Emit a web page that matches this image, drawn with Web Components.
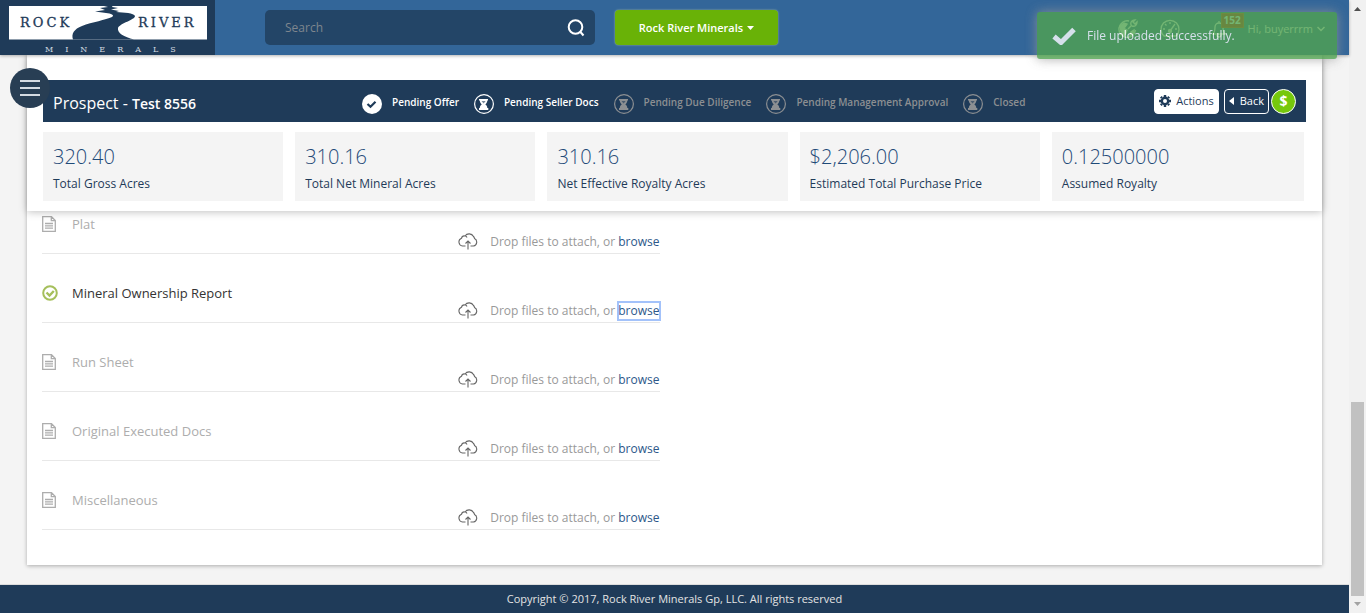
<!DOCTYPE html>
<html lang="en">
<head>
<meta charset="utf-8">
<title>Prospect - Test 8556</title>
<style>
  body { margin: 0; background: #f4f4f4; color: #333; font: 12px/18px "Open Sans", "Noto Sans", sans-serif; }
</style>
</head>
<body>
<app-shell>
  <app-header slot="header"></app-header>
  <prospect-panel slot="content" name="Test 8556">
    <pipeline-step slot="steps" state="done">Pending Offer</pipeline-step>
    <pipeline-step slot="steps" state="active">Pending Seller Docs</pipeline-step>
    <pipeline-step slot="steps">Pending Due Diligence</pipeline-step>
    <pipeline-step slot="steps">Pending Management Approval</pipeline-step>
    <pipeline-step slot="steps">Closed</pipeline-step>
    <stat-tile value="320.40">Total Gross Acres</stat-tile>
    <stat-tile value="310.16">Total Net Mineral Acres</stat-tile>
    <stat-tile value="310.16">Net Effective Royalty Acres</stat-tile>
    <stat-tile value="$2,206.00">Estimated Total Purchase Price</stat-tile>
    <stat-tile value="0.12500000">Assumed Royalty</stat-tile>
  </prospect-panel>
  <upload-list slot="content">
    <upload-row>Plat</upload-row>
    <upload-row uploaded>Mineral Ownership Report</upload-row>
    <upload-row>Run Sheet</upload-row>
    <upload-row>Original Executed Docs</upload-row>
    <upload-row>Miscellaneous</upload-row>
  </upload-list>
  <app-footer slot="footer">Copyright © 2017, Rock River Minerals Gp, LLC. All rights reserved</app-footer>
</app-shell>
<toast-message>File uploaded successfully.</toast-message>

<script>
const define = (name, render) => customElements.define(name, class extends HTMLElement {
  constructor() {
    super();
    const template = document.createElement('template');
    template.innerHTML = '<style>*{box-sizing:border-box}:host{box-sizing:border-box}svg{display:block;flex:none}</style>' + render(this);
    this.attachShadow({ mode: 'open' }).append(template.content.cloneNode(true));
  }
});

define('app-shell', () => `
<style>
  :host { display: grid; grid-template-columns: minmax(0, 1fr) 17px; min-height: 100vh; }
  .page { display: flex; flex-direction: column; }
  main { flex: 1; display: flex; padding: 0 27px 19px; }
  .card { flex: 1; min-width: 0; background: #fff; box-shadow: 0 1px 4px rgba(0,0,0,.3); padding-bottom: 35px; }
</style>
<div class="page">
  <slot name="header"></slot>
  <main><div class="card"><slot name="content"></slot></div></main>
  <slot name="footer"></slot>
</div>
<page-scrollbar></page-scrollbar>`);

define('page-scrollbar', () => `
<style>
  :host { display: flex; flex-direction: column; align-items: center; background: #f1f1f1; }
  .track { flex: 1; width: 13px; display: flex; flex-direction: column; justify-content: flex-end; }
  .thumb { height: 33.5%; background: #c1c1c1; }
</style>
<svg width="17" height="17"><path d="M5 11L8.500 7L12 11Z" fill="#505050"/></svg>
<div class="track"><div class="thumb"></div></div>
<svg width="17" height="17"><path d="M5 6L8.500 10L12 6Z" fill="#a3a3a3"/></svg>`);

define('rr-logo', () => `
<style>
  :host { display: block; width: 215px; height: 55px; background: #1f3b59; }
  text { font-family: "DejaVu Serif", serif; }
</style>
<svg width="215" height="55" viewBox="0 0 215 55" role="img" aria-label="Rock River Minerals">
  <rect x="9" y="6" width="198" height="33.500" fill="#fff"/>
  <path d="M73 39.500C71 34 74 29 82 26C92 22 106 20 112 17C115 15 111 13.500 106 13L95 11.500L105 10L100 8L108 7L100 5H113L112 7L118 8L111 9.500L119 11L116 12C124 12.500 134 13 135 16C135 20 120 23 118 28C117 33 124 37 134 39.500Z" fill="#1f3b59"/>
  <g fill="#1f3b59" stroke="#1f3b59" stroke-width=".3" font-size="13">
    <text x="20" y="27" letter-spacing="3">ROCK</text>
    <text x="138" y="27" letter-spacing="3">RIVER</text>
  </g>
  <text x="45" y="52" font-size="8" letter-spacing="12" fill="#d5dbe2">MINERALS</text>
</svg>`);

define('app-header', () => `
<style>
  :host { display: flex; align-items: center; height: 55px; background: #336699; position: relative; z-index: 3; box-shadow: 0 1px 3px rgba(0,0,0,.3); color: #fff; }
  form { display: flex; align-items: center; margin: 0 20px 0 50px; width: 330px; height: 35px; border-radius: 5px; background: #234567; padding: 0 10px 0 20px; }
  input { flex: 1; min-width: 0; border: 0; padding: 0; background: none; outline: 0; font: inherit; color: #fff; }
  input::placeholder { color: #7e868e; opacity: 1; }
  button { font: inherit; color: inherit; border: 0; background: none; padding: 0; }
  .company { display: flex; align-items: center; justify-content: center; gap: 4px; width: 163px; height: 35px; border-radius: 4px; background: #69b207; font-size: 11px; font-weight: 600; box-shadow: 0 0 2px #a8bfa0; }
  nav { display: flex; align-items: center; margin-left: auto; padding: 2px 24px 0 0; }
  .globe { margin-right: 22px; }
  .gauge { margin-right: 32px; }
  .bell { position: relative; margin-right: 22px; }
  .badge { position: absolute; left: 9px; top: -7px; padding: 0 2px; border: 1px solid #d83a00; background: #c81a00; font: 700 10px/13px "Open Sans", sans-serif; }
  .user { display: flex; align-items: center; gap: 4px; font-size: 11px; }
</style>
<rr-logo></rr-logo>
<form>
  <input type="search" placeholder="Search" aria-label="Search">
  <button type="button" aria-label="Search"><svg width="18" height="18" viewBox="0 0 18 18" fill="none" stroke="#fff" stroke-width="2"><circle cx="8.500" cy="8" r="6.800"/><path d="M13 12.500L16.500 16.500"/></svg></button>
</form>
<button class="company" aria-haspopup="true">Rock River Minerals <svg width="7" height="4"><path d="M0 0H7L3.500 4Z" fill="#fff"/></svg></button>
<nav>
  <button class="globe" aria-label="Regions"><svg width="20" height="20" viewBox="0 0 20 20" fill="none" stroke="#fff" stroke-width="1.400"><path d="M11 2A8.300 8.300 0 1 0 17.500 11"/><path d="M2 7L6 4L9 5L7 8L5 9L9 11L8 14L6 17L3 12Z" fill="#fff"/><path d="M12 17L13 13L16 11L16 14Z" fill="#fff"/><path d="M10 10L14 6M13 6C12 3 14 1 17 1L15 3L17 5L19 3C19 6 17 8 14 7"/></svg></button>
  <button class="gauge" aria-label="Dashboard"><svg width="20" height="20" viewBox="0 0 20 20" fill="none" stroke="#fff" stroke-width="1.300"><path d="M4 17A9 9 0 1 1 16 17Z"/><path d="M10 3V5M3 10H5M15 10H17M5 5L6.500 6.500M15 5L10 12"/><circle cx="10" cy="12" r="1.500" fill="#fff"/></svg></button>
  <button class="bell" aria-label="Notifications"><svg width="14" height="18" viewBox="0 0 14 18" fill="none" stroke="#fff" stroke-width="1.300"><path d="M1 14C3 12 3 10 3 7A4 4 0 0 1 11 7C11 10 11 12 13 14ZM5 15A2 2 0 0 0 9 15M7 1V3"/></svg><span class="badge">152</span></button>
  <button class="user">Hi, buyerrrm <svg width="8" height="6" fill="none" stroke="#fff" stroke-width="1.500"><path d="M0.500 1L4 4.500L7.500 1"/></svg></button>
</nav>`);

define('prospect-panel', el => `
<style>
  :host { display: block; position: relative; z-index: 2; background: #fff; padding: 25px 16px 10px; box-shadow: 0 1px 8px rgba(0,0,0,.25); }
  .bar { display: flex; align-items: center; height: 42px; padding: 0 10px; background: #1f3b59; color: #fff; }
  h1 { margin: 0; flex: 0 0 309px; font-size: 16px; line-height: 24px; font-weight: 400; padding-top: 4px; }
  b { font-size: 14px; font-weight: 600; }
  .steps { display: flex; gap: 15px; padding-top: 5px; }
  .actions { display: flex; align-items: center; gap: 5px; margin-left: auto; }
  button { display: flex; align-items: center; justify-content: center; gap: 5px; height: 25px; padding: 0 4px; border: 1px solid #fff; border-radius: 4px; background: #fff; color: #1f3b59; font: inherit; font-size: 11px; }
  .back { background: none; color: #fff; }
  .money { width: 25px; margin-left: -3px; border-radius: 50%; background: #76c80c; color: #fff; font-size: 14px; font-weight: 700; }
  .stats { display: grid; grid-template-columns: repeat(5, minmax(0, 1fr)); padding: 10px 2px 0 0; }
  .menu { position: absolute; left: -17px; top: 13px; width: 40px; height: 40px; border: 0; border-radius: 50%; background: #283e54; padding: 0; }
</style>
<div class="bar">
  <h1>Prospect - <b>${el.getAttribute('name')}</b></h1>
  <div class="steps"><slot name="steps"></slot></div>
  <div class="actions">
    <button><svg width="12" height="12" viewBox="0 0 12 12"><g fill="none" stroke="#1f3b59"><circle cx="6" cy="6" r="3.200" stroke-width="2.400"/><path stroke-width="2.400" d="M6 0V2M6 10V12M0 6H2M10 6H12M1.800 1.800L3 3M9 9L10.200 10.200M10.200 1.800L9 3M3 9L1.800 10.200"/></g></svg>Actions</button>
    <button class="back"><svg width="6" height="8"><path d="M5 0V8L0 4Z" fill="#fff"/></svg>Back</button>
    <button class="money">$</button>
  </div>
</div>
<div class="stats"><slot></slot></div>
<button class="menu" aria-label="Menu"><svg width="20" height="16" stroke="#d5dbe2" stroke-width="2"><path d="M0 1H20M0 8H20M0 15H20"/></svg></button>`);

define('pipeline-step', el => {
  const done = el.getAttribute('state') === 'done';
  const icon = done
    ? '<circle cx="10" cy="10" r="10" fill="#fff"/><path d="M5.500 10L8.500 12.800L13.500 7.800" fill="none" stroke="#1f3b59" stroke-width="2.200"/>'
    : '<circle cx="10" cy="10" r="9.400" fill="none" stroke="currentColor" stroke-width="1.200"/><path d="M5 5H14V6.500H13.300C13.300 8.500 12.300 9.500 11.300 10.300C12.300 11 13.300 12.500 13.300 14H14.300V16H5V14H5.800C5.800 12.500 6.800 11 7.800 10.300C6.800 9.500 5.800 8.500 5.800 6.500H5Z" fill="currentColor"/><path d="M7.500 7H11.700L9.600 9.500Z" fill="#1f3b59" opacity=".6"/>';
  return `
<style>
  :host { display: flex; gap: 10px; color: #8c8f92; font-size: 10px; line-height: 16px; font-weight: 600; white-space: nowrap; }
  :host([state]) { color: #fff; }
</style>
<svg width="20" height="20" viewBox="0 0 20 20">${icon}</svg><slot></slot>`;
});

define('stat-tile', el => `
<style>
  :host { display: block; margin-right: 12px; padding: 12px 10px 8px; background: #f4f4f4; color: #1f3b59; white-space: nowrap; }
  :host(:last-child) { margin-right: 0; }
  .value { font-size: 20px; line-height: 26px; font-weight: 300; color: #1f4a78; }
  .label { line-height: 18px; padding-top: 5px; }
</style>
<div class="value">${el.getAttribute('value')}</div>
<div class="label"><slot></slot></div>`);

define('upload-list', () => `
<style>:host { display: block; width: 50%; padding: 0 15px; margin-top: -26px; }</style><slot></slot>`);

define('upload-row', el => {
  const uploaded = el.hasAttribute('uploaded');
  const icon = uploaded
    ? '<svg width="16" height="16" viewBox="0 0 16 16" fill="none" stroke="#a5bf5b"><circle cx="8" cy="8" r="6.800" stroke-width="2"/><path d="M4.500 7.500L7.500 10.500L11.800 6" stroke-width="2.400"/></svg>'
    : '<svg width="16" height="16" viewBox="0 0 16 16" fill="none" stroke="#adadad" stroke-width="1.300"><path d="M0.700 0.700H9.500L13.300 4.500V15.300H0.700ZM9.300 0.700V4.700H13.300M3 7.500H11M3 9.800H11M3 12.100H11"/></svg>';
  return `
<style>
  :host { display: flex; flex-direction: column; height: 69px; padding-top: 30px; border-bottom: 1px solid #e8e8e8; }
  .name { display: flex; align-items: center; gap: 14px; font-size: 13px; line-height: 18px; color: #adadad; }
  :host([uploaded]) .name { color: #333; }
  .drop { display: flex; align-items: center; justify-content: flex-end; line-height: 18px; color: #999; white-space: pre; }
  .drop svg { margin-right: 12px; }
  a { color: #2c5789; text-decoration: none; }
  :host([uploaded]) a { outline: 2px solid #a3c2fa; outline-offset: -1px; }
</style>
<div class="name">${icon}<slot></slot></div>
<div class="drop"><svg width="20" height="18" viewBox="0 0 20 18" fill="none" stroke="#666" stroke-width="1.100"><path d="M7.500 13H4.500A4 4 0 0 1 3.500 5.300A3 3 0 0 1 7 3A5 5 0 0 1 15.500 3.500A3.500 3.500 0 0 1 16.500 5.500A4 4 0 0 1 15.500 13H12.500M7 3C8 3 8.700 3.500 9 4.500M10 16.500V8M7.500 10.500L10 8L12.500 10.500"/></svg>Drop files to attach, or <a href="#browse">browse</a></div>`;
});

define('app-footer', () => `
<style>:host { display: block; border-top: 1px solid #ddd; background: #1f3b59; color: #e4e4e4; font-size: 11px; line-height: 18px; padding: 5px 0; text-align: center; }</style><slot></slot>`);

define('toast-message', () => `
<style>
  :host { position: fixed; z-index: 9; right: 29px; top: 12px; width: 300px; height: 47px; display: flex; align-items: center; gap: 11px; padding-left: 15px; border-radius: 3px; background: #51a351; color: #fff; opacity: .8; box-shadow: 0 0 12px #999; }
</style>
<svg width="24" height="18" viewBox="0 0 24 18"><path d="M2 9.500L9 15.500L22 2.500" fill="none" stroke="#fff" stroke-width="5"/></svg><span role="status"><slot></slot></span>`);
</script>
</body>
</html>
